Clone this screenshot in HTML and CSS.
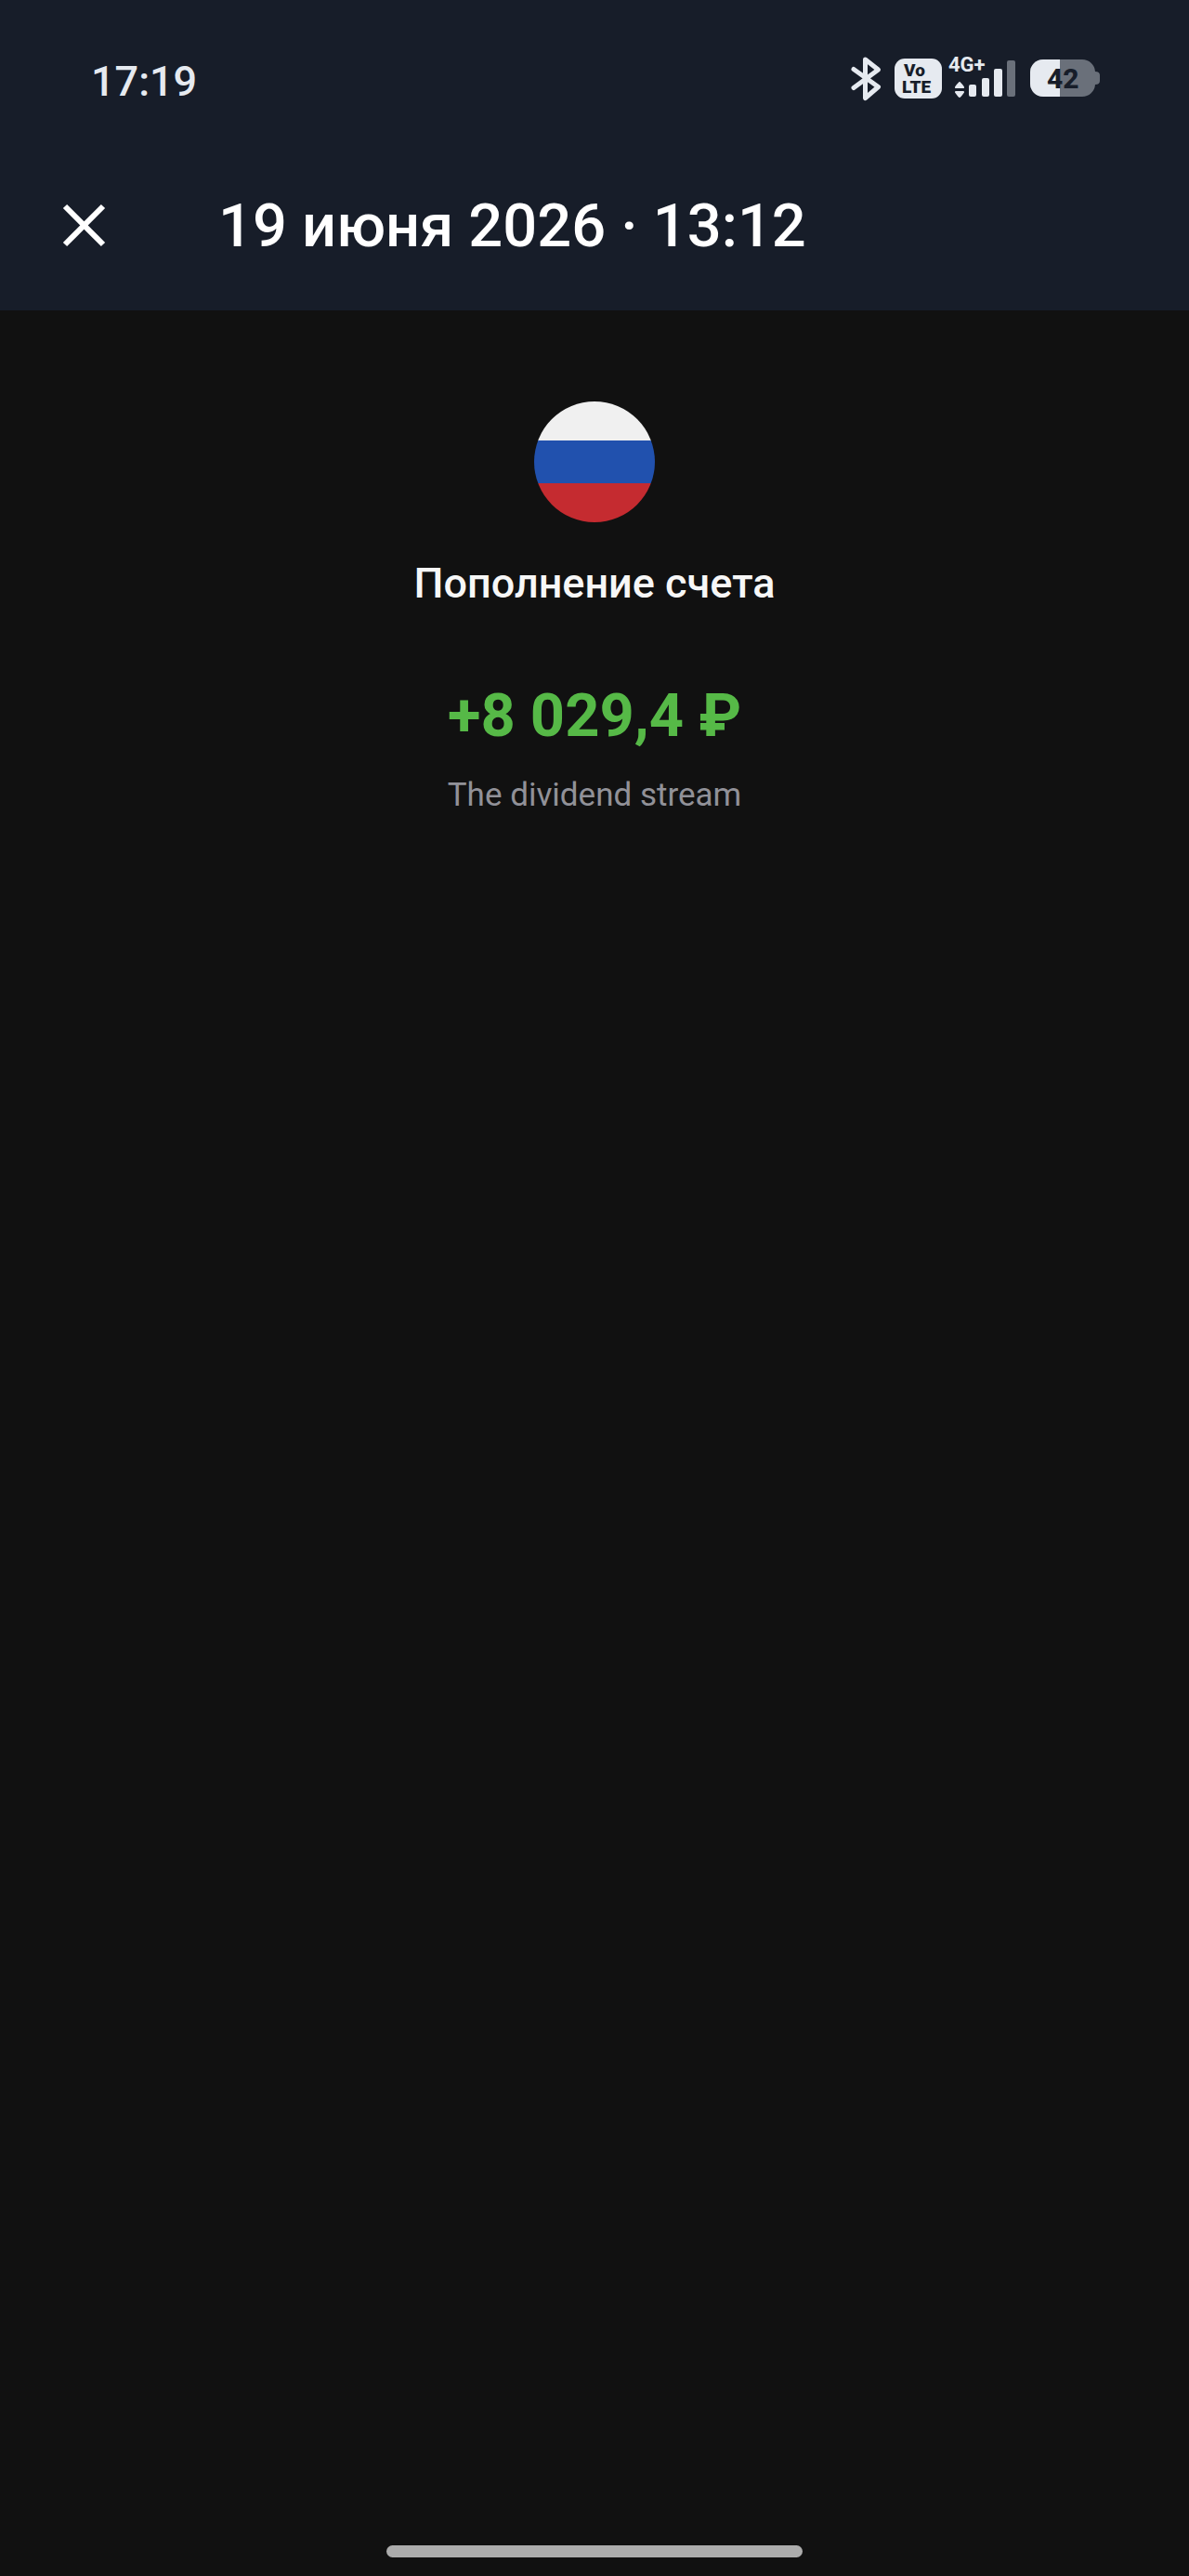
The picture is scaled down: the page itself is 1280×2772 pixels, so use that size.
FILE: index.html
```html
<!DOCTYPE html>
<html lang="ru">

<head>
    <meta charset="UTF-8">
    <meta name="viewport" content="width=device-width, initial-scale=1.0">
    <title>Пополнение счета</title>
    <link rel="stylesheet" href="styles.css">
</head>

<body>
    <header class="header">
        <div class="status-bar">
            <time class="clock">17:19</time>
            <div class="status-icons">
                <svg class="icon-bluetooth" width="32" height="48" viewBox="0 0 32 48" aria-label="Bluetooth">
                    <path d="M3 12.5 29.500 31.500 15.500 43.500V2L29.500 13 3 32.500" fill="none" stroke="currentColor" stroke-width="5" stroke-linecap="round" stroke-linejoin="round"/>
                </svg>
                <svg class="icon-volte" width="51" height="48" viewBox="0 0 51 48" aria-label="VoLTE">
                    <rect y="1" width="51" height="43" rx="11" fill="currentColor"/>
                    <text class="volte-text" x="10" y="20">Vo</text>
                    <text class="volte-text" x="8" y="38">LTE</text>
                </svg>
                <svg class="icon-signal" width="73" height="48" viewBox="0 0 73 48" aria-label="4G+">
                    <text class="network-text" x="0" y="15">4G+</text>
                    <path d="M12 26q1 0 5 5.500q.5 1.500-1 1.500H8q-1.500 0-1-1.500Q11 26 12 26zM12 43q1 0 5-5.500q.5-1.500-1-1.500H8q-1.500 0-1 1.500Q11 43 12 43z" fill="currentColor"/>
                    <rect x="22" y="29" width="8" height="13" rx="2" fill="currentColor"/>
                    <rect x="36" y="22" width="8" height="20" rx="2" fill="currentColor"/>
                    <rect x="49" y="12" width="9" height="30" rx="2" fill="currentColor"/>
                    <rect x="63" y="3" width="9" height="39" rx="2" fill="#6a707a"/>
                </svg>
                <svg class="icon-battery" width="75" height="48" viewBox="0 0 75 48" aria-label="42%">
                    <path d="M14 2h42a14 14 0 0 1 14 13q5 0 5 4v6q0 4-5 4a14 14 0 0 1-14 13H14A14 14 0 0 1 0 28V16A14 14 0 0 1 14 2z" fill="#6a707a"/>
                    <path d="M32 2H14A14 14 0 0 0 0 16v12a14 14 0 0 0 14 14h18z" fill="currentColor"/>
                    <text class="battery-text" x="18" y="33">42</text>
                </svg>
            </div>
        </div>
        <div class="app-bar">
            <button class="close-btn" type="button" aria-label="Закрыть">
                <svg width="48" height="48" viewBox="0 0 48 48">
                    <path d="M3 3l41 41M44 3l-41 41" stroke="currentColor" stroke-width="6"/>
                </svg>
            </button>
            <h1>19 июня 2026 · 13:12</h1>
        </div>
    </header>

    <main class="operation">
        <svg class="flag" width="130" height="130" viewBox="0 0 130 130" aria-hidden="true">
            <clipPath id="circle"><circle cx="65" cy="65" r="65"/></clipPath>
            <g clip-path="url(#circle)">
                <rect width="130" height="43" fill="#f0f0f0"/>
                <rect y="42" width="130" height="46" fill="#2151ae"/>
                <rect y="88" width="130" height="42" fill="#c52b30"/>
            </g>
        </svg>
        <h2>Пополнение счета</h2>
        <p class="amount">+8 029,4 ₽</p>
        <p class="account">The dividend stream</p>
    </main>

    <div class="nav-bar">
        <div class="nav-handle"></div>
    </div>
</body>

</html>
```
FILE: styles.css
```css
* {
    box-sizing: border-box;
}

body {
    display: flex;
    flex-direction: column;
    min-height: 100vh;
    margin: 0;
    background: #111111;
    color: #f7f7f7;
    font-family: Roboto, "Noto Sans", sans-serif;
}

h1,
h2,
p {
    margin: 0;
}

.header {
    background: #171d29;
}

.status-bar {
    display: flex;
    justify-content: space-between;
    align-items: center;
    height: 152px;
    padding: 22px 96px 0 98px;
    color: #e6eaf0;
}

.clock {
    font-size: 45px;
    font-weight: 500;
}

.status-icons {
    display: flex;
    align-items: center;
    padding-bottom: 2px;
}

.status-icons svg {
    display: block;
    overflow: visible;
}

.icon-volte {
    margin: 0 7px 0 15px;
}

.icon-battery {
    margin-left: 15px;
}

.volte-text {
    fill: #171d29;
    font-size: 19px;
    font-weight: 900;
}

.network-text {
    fill: currentColor;
    font-size: 22px;
    font-weight: 700;
}

.battery-text {
    fill: #171d29;
    font-size: 30px;
    font-weight: 800;
}

.app-bar {
    display: flex;
    align-items: center;
    gap: 96px;
    height: 182px;
    padding: 0 43px;
    color: #ffffff;
}

.close-btn {
    display: flex;
    align-items: center;
    justify-content: center;
    width: 96px;
    height: 96px;
    padding: 0;
    border: none;
    background: none;
    color: inherit;
    cursor: pointer;
}

.app-bar h1 {
    font-size: 65px;
    font-weight: 500;
    line-height: 80px;
}

.operation {
    display: flex;
    flex: 1;
    flex-direction: column;
    align-items: center;
    padding: 98px 48px 48px;
    text-align: center;
}

.operation h2 {
    margin-top: 36px;
    font-size: 45px;
    font-weight: 500;
    line-height: 60px;
}

.amount {
    margin-top: 72px;
    color: #56b947;
    font-size: 65px;
    font-weight: 700;
    line-height: 80px;
}

.account {
    margin-top: 22px;
    color: #919198;
    font-size: 35px;
    line-height: 48px;
}

.nav-bar {
    display: flex;
    justify-content: center;
    padding-bottom: 20px;
}

.nav-handle {
    width: 35%;
    height: 13px;
    border-radius: 7px;
    background: #acacac;
}
```
